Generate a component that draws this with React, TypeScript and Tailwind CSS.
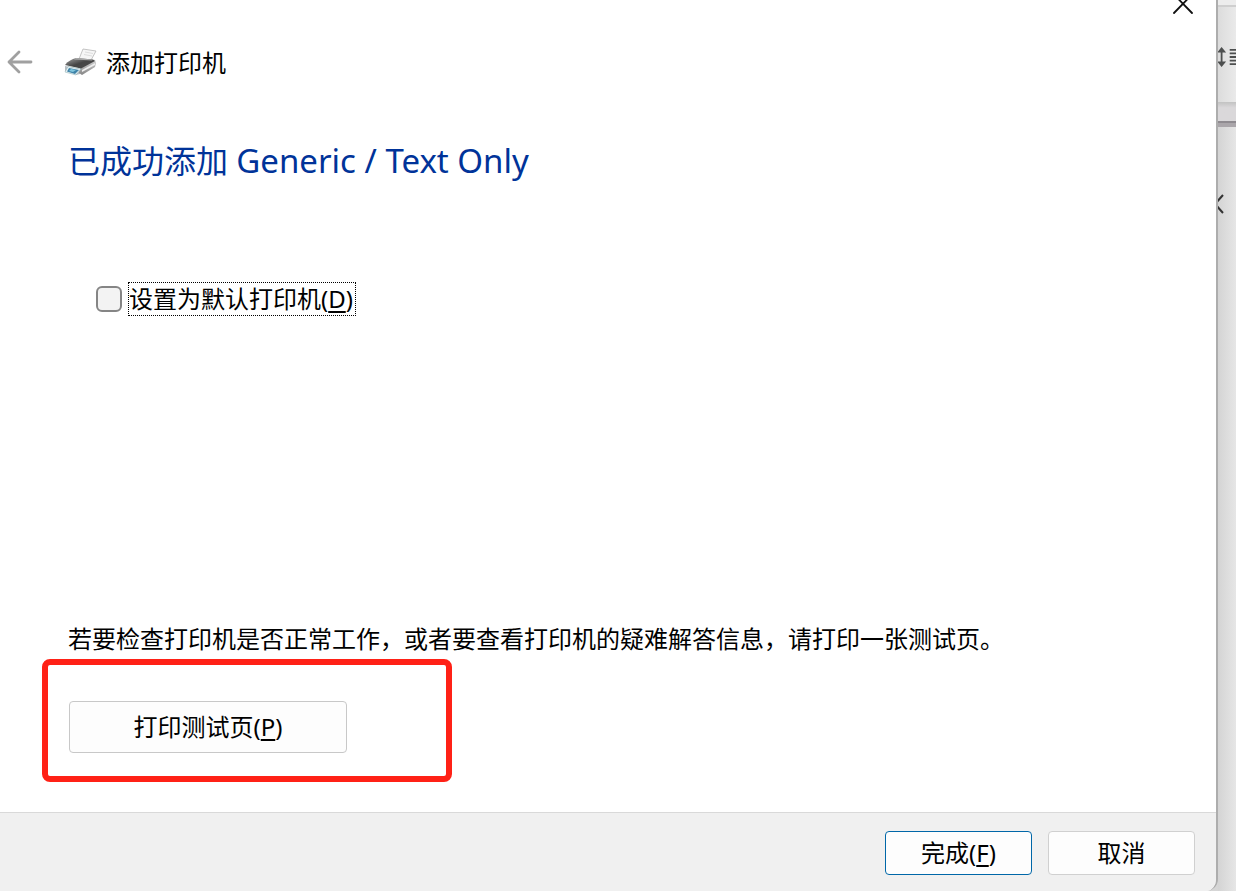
import type { ReactNode } from 'react';

function CloseIcon() {
  return (
    <svg width="22" height="16" viewBox="0 0 22 16" fill="none" stroke="#111" strokeWidth="1.8" strokeLinecap="round">
      <path d="M2 -5.500 L20 13 M20 -5.500 L2 13" />
    </svg>
  );
}

function BackIcon() {
  return (
    <svg width="26" height="24" viewBox="0 0 26 24" fill="none" stroke="#a0a0a0" strokeWidth="2.8" strokeLinecap="round" strokeLinejoin="round">
      <path d="M24 12 H2 M12 2 L2 12 L12 22" />
    </svg>
  );
}

function PrinterIcon() {
  return (
    <svg width="34" height="32" viewBox="0 0 34 32">
      <defs>
        <linearGradient id="lid" x1="0" y1="0" x2="1" y2="1">
          <stop offset="0" stopColor="#a5a5a5" />
          <stop offset="0.5" stopColor="#454545" />
          <stop offset="1" stopColor="#4a4a4a" />
        </linearGradient>
        <linearGradient id="side" x1="0" y1="0" x2="0" y2="1">
          <stop offset="0" stopColor="#d5d5d5" />
          <stop offset="1" stopColor="#858585" />
        </linearGradient>
      </defs>
      <path d="M19 3 L32 5 L26 16 L15 13 Z" fill="#f6f6f6" stroke="#b5b5b5" strokeWidth="0.8" />
      <path d="M21 6 L29 7.500 M20 8.500 L28 10" fill="none" stroke="#ddd" />
      <path d="M1 20 L16 23 V28 L12 29 L1 25 Z" fill="#b7bdc2" />
      <path d="M16 22 L31 13.500 L32 17 L31 21 L18 29 L15 27 Z" fill="url(#side)" />
      <path d="M18 24 L31 17 V19 L18 26 Z" fill="#eee" />
      <path d="M1 19 C4 15 8 13 12 12 L29 13.500 L31 15 L17 22.500 Z" fill="url(#lid)" />
      <path d="M12 12 L29 13.500 L28 14.500 L10 13.500 Z" fill="#aaa" />
      <path d="M4 20.500 L17 23 L12 29 L1 26 Z" fill="#e5f0f5" stroke="#8aa" strokeWidth="0.5" />
      <path d="M5 22 L15 24 L11 28 L3 25.500 Z" fill="#3f83a8" />
      <path d="M7 23 L12 24 L9 26 L5 25 Z" fill="#7fc5dd" />
    </svg>
  );
}

function LineSpacingIcon() {
  return (
    <svg width="20" height="24" viewBox="0 0 20 24" fill="#4d4f4f">
      <path d="M4 1 L9 7 H5 V17 H9 L4 23 L-1 17 H3 V7 H-1 Z" />
      <path d="M13 3 H20 V5 H13 Z M13 7 H20 V9 H13 Z M13 11 H20 V13 H13 Z M13 15 H20 V17 H13 Z M13 19 H20 V21 H13 Z" />
    </svg>
  );
}

function ChevronIcon() {
  return (
    <svg width="9" height="22" viewBox="0 0 9 22" fill="none" stroke="#333" strokeWidth="2">
      <path d="M5 2 L-3 11 L5 20" />
    </svg>
  );
}

function DialogButton({ children, className }: { children: ReactNode; className: string }) {
  return (
    <button type="button" className={`flex items-center justify-center rounded border bg-[#fdfdfd] ${className}`}>
      {children}
    </button>
  );
}

function Key({ children }: { children: string }) {
  return <span className="underline decoration-2 underline-offset-3">{children}</span>;
}

export default function App() {
  return (
    <div className="flex min-h-screen bg-[#d6d6d6] font-['Noto_Sans','Noto_Sans_CJK_SC',sans-serif] text-2xl text-black">
      <section className="flex min-w-0 flex-1 flex-col overflow-hidden rounded-br-xl border-r-2 border-[#adadad] bg-white">
        <div className="flex h-4 justify-end pr-[22px]">
          <button type="button" aria-label="关闭" className="flex">
            <CloseIcon />
          </button>
        </div>

        <header className="mt-7 flex h-9 items-center pl-[7px]">
          <button type="button" aria-label="返回" className="mr-[31px]">
            <BackIcon />
          </button>
          <PrinterIcon />
          <span className="ml-2 pt-[2px]">添加打印机</span>
        </header>

        <main className="flex flex-1 flex-col">
          <h1 className="mt-15 pl-17 text-[32px] leading-[42px] text-[#003399]">
            已成功添加 <span className="text-[33px]">Generic / Text Only</span>
          </h1>

          <div className="mt-[100px] flex items-center gap-[6px] pl-24">
            <input
              id="default-printer"
              type="checkbox"
              className="h-[26px] w-[26px] appearance-none rounded-md border-2 border-[#858585] bg-[#f3f3f3] checked:bg-[#005fb8]"
            />
            <label htmlFor="default-printer" className="border border-dotted border-black pr-[2px] leading-8">
              设置为默认打印机(<Key>D</Key>)
            </label>
          </div>

          <p className="mt-auto pl-17">若要检查打印机是否正常工作，或者要查看打印机的疑难解答信息，请打印一张测试页。</p>
          <div className="mt-1 mb-[30px] ml-[42px] w-[410px] rounded-lg border-6 border-[#ff2116] px-[21px] pt-9 pb-[23px]">
            <DialogButton className="h-[52px] w-[278px] border-[#c8c8c8]">
              <span>打印测试页(<Key>P</Key>)</span>
            </DialogButton>
          </div>
        </main>

        <footer className="flex justify-end gap-4 border-t border-[#d9d9d9] bg-[#f0f0f0] pt-[18px] pr-[21px] pb-4">
          <DialogButton className="h-11 w-[147px] border-[#0067a8]">
            <span>完成(<Key>F</Key>)</span>
          </DialogButton>
          <DialogButton className="h-11 w-[147px] border-[#d0d0d0]">取消</DialogButton>
        </footer>
      </section>

      <aside className="flex w-[18px] flex-col overflow-hidden">
        <div className="h-[7px] border-b-2 border-[#cfcfcf] bg-[#ededed]" />
        <div className="flex h-[95px] items-center bg-linear-to-r from-[#dcdcdc] to-[#eaeaea] pt-1">
          <LineSpacingIcon />
        </div>
        <div className="h-[19px] bg-linear-to-b from-[#c2c2c2] to-[#dad8da] to-30%" />
        <div className="h-[6px] border-t-2 border-[#8f8b90] bg-[#aaa6aa]" />
        <div className="flex-1 bg-linear-to-r from-[#d4d4d4] to-[#e6e6e6] pt-[66px]">
          <ChevronIcon />
        </div>
      </aside>
    </div>
  );
}
